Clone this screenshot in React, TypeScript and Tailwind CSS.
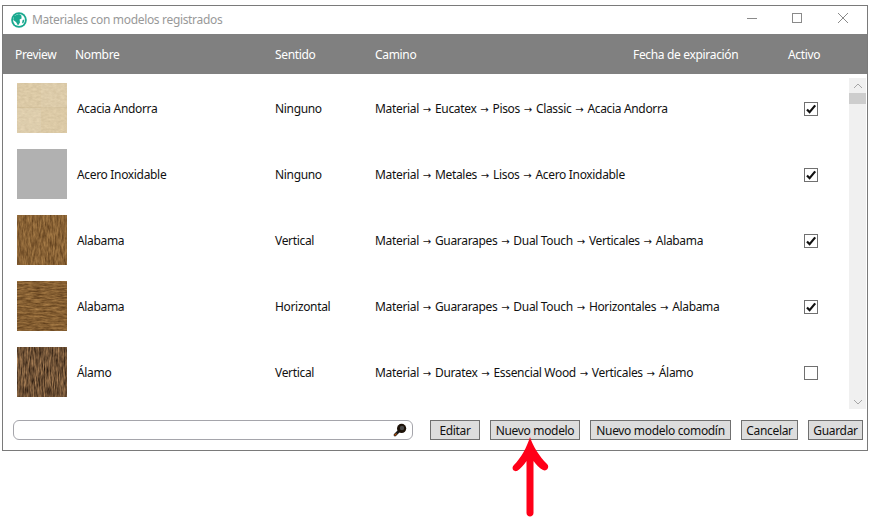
import React from "react";

const F = "font-['Noto_Sans','Open_Sans',sans-serif]";

type WoodProps = { id: string; fx: number; fy: number; seed: number; octaves: number; m: string };

function Wood({ id, fx, fy, seed, octaves, m }: WoodProps) {
  return (
    <svg width="50" height="50" viewBox="0 0 50 50" className="block shrink-0">
      <filter id={id} x="0" y="0" width="100%" height="100%" colorInterpolationFilters="sRGB">
        <feTurbulence type="fractalNoise" baseFrequency={`${fx} ${fy}`} numOctaves={octaves} seed={seed} />
        <feColorMatrix type="matrix" values={m} />
      </filter>
      <rect width="50" height="50" filter={`url(#${id})`} />
    </svg>
  );
}

function Beige() {
  return (
    <svg width="50" height="50" viewBox="0 0 50 50" className="block shrink-0">
      <filter id="beige" x="0" y="0" width="100%" height="100%" colorInterpolationFilters="sRGB">
        <feTurbulence type="fractalNoise" baseFrequency="0.25 0.5" numOctaves={3} seed={4} />
        <feColorMatrix type="matrix" values="0.1 0 0 0 0.81  0.1 0 0 0 0.74  0.1 0 0 0 0.6  0 0 0 0 1" />
      </filter>
      <rect width="50" height="50" filter="url(#beige)" />
      <rect x="0" y="25" width="24" height="25" fill="#fff" opacity="0.08" />
      <rect x="24" y="0" width="26" height="25" fill="#fff" opacity="0.05" />
      <rect x="0" y="24.5" width="50" height="0.6" fill="#a88f62" opacity="0.25" />
    </svg>
  );
}

function Gray() {
  return <div className="w-[50px] h-[50px] bg-[#b1b1b1] shrink-0" />;
}

const rows = [
  { name: "Acacia Andorra", dir: "Ninguno", path: "Material → Eucatex → Pisos → Classic → Acacia Andorra", on: true, thumb: <Beige /> },
  { name: "Acero Inoxidable", dir: "Ninguno", path: "Material → Metales → Lisos → Acero Inoxidable", on: true, thumb: <Gray /> },
  {
    name: "Alabama", dir: "Vertical", path: "Material → Guararapes → Dual Touch → Verticales → Alabama", on: true,
    thumb: <Wood id="w1" fx={0.6} fy={0.12} seed={7} octaves={3} m="0.42 0 0 0 0.32  0.36 0 0 0 0.2  0.25 0 0 0 0.08  0 0 0 0 1" />,
  },
  {
    name: "Alabama", dir: "Horizontal", path: "Material → Guararapes → Dual Touch → Horizontales → Alabama", on: true,
    thumb: <Wood id="w2" fx={0.12} fy={0.6} seed={11} octaves={3} m="0.42 0 0 0 0.31  0.36 0 0 0 0.19  0.25 0 0 0 0.07  0 0 0 0 1" />,
  },
  {
    name: "Álamo", dir: "Vertical", path: "Material → Duratex → Essencial Wood → Verticales → Álamo", on: false,
    thumb: <Wood id="w3" fx={0.8} fy={0.1} seed={3} octaves={3} m="0.75 0 0 0 0.06  0.6 0 0 0 0.02  0.42 0 0 0 0  0 0 0 0 1" />,
  },
];

function PathText({ text }: { text: string }) {
  const parts = text.split(" → ");
  return (
    <span className="pt-[2px] whitespace-nowrap">
      {parts.map((p, i) => (
        <React.Fragment key={i}>
          {i > 0 && <span className="inline-block w-[16px] text-center font-['DejaVu_Sans'] text-[10px] tracking-normal">→</span>}
          {p}
        </React.Fragment>
      ))}
    </span>
  );
}

function Check({ on }: { on: boolean }) {
  return (
    <div className="w-[14px] h-[14px] mt-[2px] border border-[#707070] bg-white flex items-center justify-center">
      {on && (
        <svg width="12" height="12" viewBox="0 0 12 12">
          <path d="M2 6.4 L4.6 9.2 L10.2 2.4" fill="none" stroke="#111" strokeWidth="2.2" />
        </svg>
      )}
    </div>
  );
}

function Btn({ w, children }: { w: string; children: React.ReactNode }) {
  return (
    <div className={`${w} h-[20px] border border-[#707070] bg-[#dddddd] flex items-center justify-center text-[12px] tracking-[-0.33px] text-[#111] pt-[1px]`}>
      {children}
    </div>
  );
}

export default function App() {
  return (
    <div className={`relative w-[872px] h-[526px] bg-white overflow-hidden pt-[5px] pl-[2px] ${F}`}>
      <div className="w-[866px] h-[446px] border border-[#7a7a7a] bg-white flex flex-col">
        {/* title bar */}
        <div className="h-[28px] flex items-center shrink-0">
          <svg width="16" height="16" viewBox="0 0 16 16" className="ml-[8px]">
            <circle cx="8" cy="8" r="7.8" fill="#19a98f" />
            <circle cx="8" cy="8" r="6" fill="#fff" />
            <path d="M3 4 L8 2 L10.4 3.4 L10.6 6.4 L8.6 7.6 L9 10.6 L7 13.6 L5 10 L2.2 8 Z" fill="#19a98f" />
            <path d="M11.6 8 L13.4 7.4 L12.8 10.6 L11 11.4 Z" fill="#19a98f" />
          </svg>
          <span className="ml-[5px] text-[12px] text-[#999999] tracking-[-0.33px]">Materiales con modelos registrados</span>
          <div className="ml-auto flex items-center mb-[4px]">
            <svg width="12" height="12" viewBox="0 0 12 12" className="mr-[33px]"><path d="M1 6.5 H11" stroke="#8a8a8a" /></svg>
            <svg width="12" height="12" viewBox="0 0 12 12" className="mr-[34px]"><rect x="1.5" y="1.5" width="9" height="9" fill="none" stroke="#8a8a8a" /></svg>
            <svg width="12" height="12" viewBox="0 0 12 12" className="mr-[18px]"><path d="M1 1 L11 11 M11 1 L1 11" stroke="#8a8a8a" /></svg>
          </div>
        </div>

        {/* header */}
        <div className="h-[40px] shrink-0 bg-[#808080] text-white text-[12px] tracking-[-0.33px] grid grid-cols-[72px_200px_100px_258px_155px_1fr] items-center pt-[2px]">
          <span className="pl-[12px]">Preview</span>
          <span>Nombre</span>
          <span>Sentido</span>
          <span>Camino</span>
          <span>Fecha de expiración</span>
          <span>Activo</span>
        </div>

        {/* list */}
        <div className="flex-1 flex min-h-0">
          <div className="flex-1 pt-[9px] flex flex-col gap-[16px] text-[12px] tracking-[-0.33px] text-[#111] min-w-0">
            {rows.map((r, i) => (
              <div key={i} className="h-[50px] grid grid-cols-[60px_198px_100px_429px_1fr] items-center pl-[14px]">
                <div>{r.thumb}</div>
                <span className="pt-[2px]">{r.name}</span>
                <span className="pt-[2px]">{r.dir}</span>
                <PathText text={r.path} />
                <Check on={r.on} />
              </div>
            ))}
          </div>
          <div className="w-[17px] mt-[4px] h-[331px] bg-[#f0f0f0] mr-[1px] flex flex-col shrink-0">
            <div className="h-[15px] flex items-center justify-center">
              <svg width="10" height="6" viewBox="0 0 10 6"><path d="M1 5 L5 1 L9 5" fill="none" stroke="#a6a6a6" /></svg>
            </div>
            <div className="h-[11px] bg-[#cdcdcd]" />
            <div className="flex-1" />
            <div className="h-[15px] flex items-center justify-center">
              <svg width="10" height="6" viewBox="0 0 10 6"><path d="M1 1 L5 5 L9 1" fill="none" stroke="#a6a6a6" /></svg>
            </div>
          </div>
        </div>

        {/* footer */}
        <div className="h-[40px] shrink-0 flex items-start pt-[10px] pl-[10px]">
          <div className="w-[400px] h-[20px] rounded-[6px] border border-[#a5a5ab] flex items-center justify-end pr-[5px] mr-[17px]">
            <svg width="14" height="14" viewBox="0 0 14 14">
              <path d="M2 12 L5.5 8.5" stroke="#1a1a1a" strokeWidth="2.8" strokeLinecap="round" />
              <circle cx="8.6" cy="5.4" r="4.6" fill="#1d1208" />
              <circle cx="9" cy="5" r="2.2" fill="#4a4a4a" />
              <path d="M1.5 12.5 L3.5 10.5" stroke="#b5560f" strokeWidth="1.2" />
            </svg>
          </div>
          <div className="flex gap-[10px]">
            <Btn w="w-[50px]">Editar</Btn>
            <Btn w="w-[90px]">Nuevo modelo</Btn>
            <Btn w="w-[141px]">Nuevo modelo comodín</Btn>
            <Btn w="w-[57px]">Cancelar</Btn>
            <Btn w="w-[55px]">Guardar</Btn>
          </div>
        </div>
      </div>

      {/* red annotation arrow */}
      <svg width="44" height="84" viewBox="0 0 44 84" className="absolute left-[508px] top-[436px]">
        <path
          d="M22 1 C25 10 31 20 39 28 C42 31 39 36 35 34 C31 32 28 28 25.5 25 L25.5 77 C25.5 81.5 18.5 81.5 18.5 77 L18.5 25 C16 29 12 33 9 35 C5 36 3 32 6 29 C13 22 19 11 22 1 Z"
          fill="#ff0018"
        />
      </svg>
    </div>
  );
}
